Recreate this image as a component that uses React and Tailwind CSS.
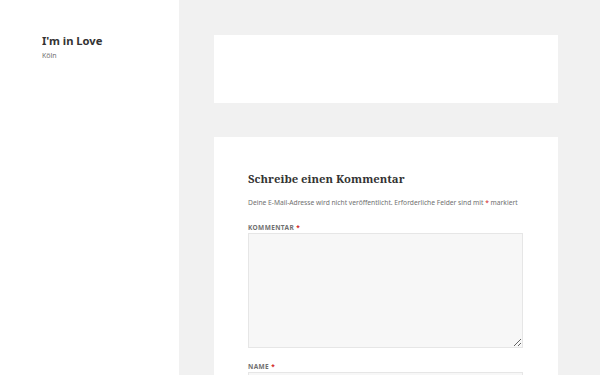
import React from 'react';

/* Twenty Fifteen-ish single post: sidebar + comment form */

const Req = () => <span className="text-[#d11c1c]">*</span>;

const Field = ({ label, children }) => (
  <p className="mb-[13px]">
    <label className="block text-[6.5px] font-bold uppercase tracking-[0.06em] text-[#707070] leading-[11px]">
      {label} <Req />
    </label>
    {children}
  </p>
);

export default function App() {
  return (
    <div className="flex h-[375px] overflow-hidden bg-[#f1f1f1] text-[#333] font-['Noto_Sans',sans-serif]">
      {/* Sidebar */}
      <aside className="w-[179px] shrink-0 bg-white pl-[42px] pt-[33px]">
        <h1 className="text-[11.2px] font-bold leading-[16px] text-[#333]">I'm in Love</h1>
        <p className="text-[7px] text-[#707070] leading-[12px] mt-[1px]">Köln</p>
      </aside>

      {/* Main */}
      <main className="flex-1 pl-[35px] pr-[42px] pt-[35px] flex flex-col gap-[34px]">
        <article className="bg-white h-[68px] shrink-0" />

        <section className="shrink-0 bg-white pl-[34px] pr-[35px] pt-[33px] pb-[20px]">
          <h3 className="font-['Noto_Serif','DejaVu_Serif',serif] font-bold text-[11.3px] leading-[18px] text-[#333] mb-[9px]">
            Schreibe einen Kommentar
          </h3>
          <p className="text-[6.7px] text-[#707070] leading-[12px] mb-[13px]">
            Deine E-Mail-Adresse wird nicht veröffentlicht. Erforderliche Felder sind mit <Req /> markiert
          </p>
          <Field label="Kommentar">
            <textarea className="block w-full h-[115px] bg-[#f7f7f7] border border-[#e6e6e6] resize-y" />
          </Field>
          <Field label="Name">
            <input className="block w-full h-[22px] bg-[#f7f7f7] border border-[#e6e6e6]" />
          </Field>
        </section>
      </main>
    </div>
  );
}
